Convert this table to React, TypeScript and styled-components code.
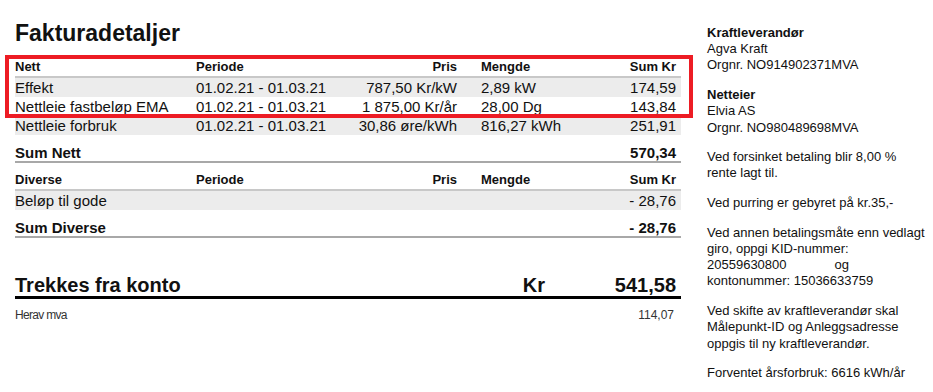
import styled, { createGlobalStyle } from 'styled-components'

const GlobalStyle = createGlobalStyle`
  html, body {
    margin: 0;
    padding: 0;
    background: #fff;
  }
  body {
    font-family: 'Liberation Sans', Arial, sans-serif;
    color: #111;
  }
`

const Page = styled.div`
  display: flex;
  width: 933px;
  height: 392px;
  box-sizing: border-box;
  padding: 20px 0 0 15px;
  gap: 26px;
  overflow: hidden;
`

const Main = styled.div`
  width: 666px;
  display: flex;
  flex-direction: column;
`

const Title = styled.h1`
  margin: 0 0 12px;
  font-size: 23px;
  line-height: 26px;
  font-weight: 700;
`

const Section = styled.div`
  position: relative;
`

// red annotation drawn over the first rows
const Highlight = styled.div`
  position: absolute;
  left: -10px;
  top: -3px;
  width: 688px;
  height: 63px;
  box-sizing: border-box;
  border: 4px solid #ed1c24;
  pointer-events: none;
`

const RowBase = styled.div`
  display: grid;
  grid-template-columns: 181px 150px 111px 155px 1fr;
`

const HeadRow = styled(RowBase)<{ $spaced?: boolean }>`
  height: 17px;
  margin-top: ${(p) => (p.$spaced ? '8px' : '0')};
  padding-bottom: 1px;
  align-items: end;
  font-size: 13px;
  line-height: 17px;
  font-weight: 700;
  border-bottom: 2px solid #c8c8c8;
`

const DataRow = styled(RowBase)<{ $shade?: boolean }>`
  height: 19px;
  align-items: center;
  font-size: 15px;
  line-height: 19px;
  background: ${(p) => (p.$shade ? '#ececec' : 'transparent')};
`

const SumRow = styled(RowBase)`
  height: 26px;
  align-items: end;
  font-size: 15px;
  line-height: 17px;
  font-weight: 700;
  border-bottom: 2px solid #a8a8a8;
`

const Cell = styled.div`
  white-space: nowrap;
`

const PriceCell = styled(Cell)`
  text-align: right;
`

const QtyCell = styled(Cell)`
  padding-left: 24px;
`

const SumCell = styled(Cell)`
  text-align: right;
  padding-right: 5px;
`

const TotalRow = styled.div`
  display: grid;
  grid-template-columns: 1fr auto 131px;
  margin-top: 36px;
  height: 22px;
  padding-right: 5px;
  font-size: 20px;
  line-height: 22px;
  font-weight: 700;
  border-bottom: 3px solid #000;
`

const TotalAmount = styled.div`
  text-align: right;
`

const VatRow = styled.div`
  display: flex;
  justify-content: space-between;
  margin-top: 9px;
  padding-right: 7px;
  font-size: 12px;
  line-height: 15px;
  color: #333;
`

const VatLabel = styled.span`
  letter-spacing: -0.7px;
`

const Sidebar = styled.div`
  width: 220px;
  padding-top: 5px;
  font-size: 13px;
  line-height: 16.2px;
  color: #111;
`

const Para = styled.p`
  margin: 0 0 13.5px;
`

const Label = styled.div`
  font-weight: 700;
`

const Redacted = styled.span`
  display: inline-block;
  width: 48px;
`

type Line = { name: string; period: string; price: string; qty: string; sum: string }

const nett: Line[] = [
  { name: 'Effekt', period: '01.02.21 - 01.03.21', price: '787,50 Kr/kW', qty: '2,89 kW', sum: '174,59' },
  { name: 'Nettleie fastbeløp EMA', period: '01.02.21 - 01.03.21', price: '1 875,00 Kr/år', qty: '28,00 Dg', sum: '143,84' },
  { name: 'Nettleie forbruk', period: '01.02.21 - 01.03.21', price: '30,86 øre/kWh', qty: '816,27 kWh', sum: '251,91' },
]

const diverse: Line[] = [{ name: 'Beløp til gode', period: '', price: '', qty: '', sum: '- 28,76' }]

const Header = ({ title, spaced }: { title: string; spaced?: boolean }) => (
  <HeadRow $spaced={spaced}>
    <Cell>{title}</Cell>
    <Cell>Periode</Cell>
    <PriceCell>Pris</PriceCell>
    <QtyCell>Mengde</QtyCell>
    <SumCell>Sum Kr</SumCell>
  </HeadRow>
)

const Rows = ({ lines }: { lines: Line[] }) => (
  <>
    {lines.map((l, i) => (
      <DataRow key={l.name} $shade={i % 2 === 0}>
        <Cell>{l.name}</Cell>
        <Cell>{l.period}</Cell>
        <PriceCell>{l.price}</PriceCell>
        <QtyCell>{l.qty}</QtyCell>
        <SumCell>{l.sum}</SumCell>
      </DataRow>
    ))}
  </>
)

const Sum = ({ label, value }: { label: string; value: string }) => (
  <SumRow>
    <Cell>{label}</Cell>
    <Cell />
    <Cell />
    <Cell />
    <SumCell>{value}</SumCell>
  </SumRow>
)

export default function App() {
  return (
    <>
      <GlobalStyle />
      <Page>
        <Main>
          <Title>Fakturadetaljer</Title>
          <Section>
            <Header title="Nett" />
            <Rows lines={nett} />
            <Highlight />
          </Section>
          <Sum label="Sum Nett" value="570,34" />
          <Header title="Diverse" spaced />
          <Rows lines={diverse} />
          <Sum label="Sum Diverse" value="- 28,76" />
          <TotalRow>
            <div>Trekkes fra konto</div>
            <div>Kr</div>
            <TotalAmount>541,58</TotalAmount>
          </TotalRow>
          <VatRow>
            <VatLabel>Herav mva</VatLabel>
            <span>114,07</span>
          </VatRow>
        </Main>
        <Sidebar>
          <Para>
            <Label>Kraftleverandør</Label>
            Agva Kraft
            <br />
            Orgnr. NO914902371MVA
          </Para>
          <Para>
            <Label>Netteier</Label>
            Elvia AS
            <br />
            Orgnr. NO980489698MVA
          </Para>
          <Para>
            Ved forsinket betaling blir 8,00 %
            <br />
            rente lagt til.
          </Para>
          <Para>Ved purring er gebyret på kr.35,-</Para>
          <Para>
            Ved annen betalingsmåte enn vedlagt
            <br />
            giro, oppgi KID-nummer:
            <br />
            20559630800
            <Redacted />
            og
            <br />
            kontonummer: 15036633759
          </Para>
          <Para>
            Ved skifte av kraftleverandør skal
            <br />
            Målepunkt-ID og Anleggsadresse
            <br />
            oppgis til ny kraftleverandør.
          </Para>
          <Para>Forventet årsforbruk: 6616 kWh/år</Para>
        </Sidebar>
      </Page>
    </>
  )
}
